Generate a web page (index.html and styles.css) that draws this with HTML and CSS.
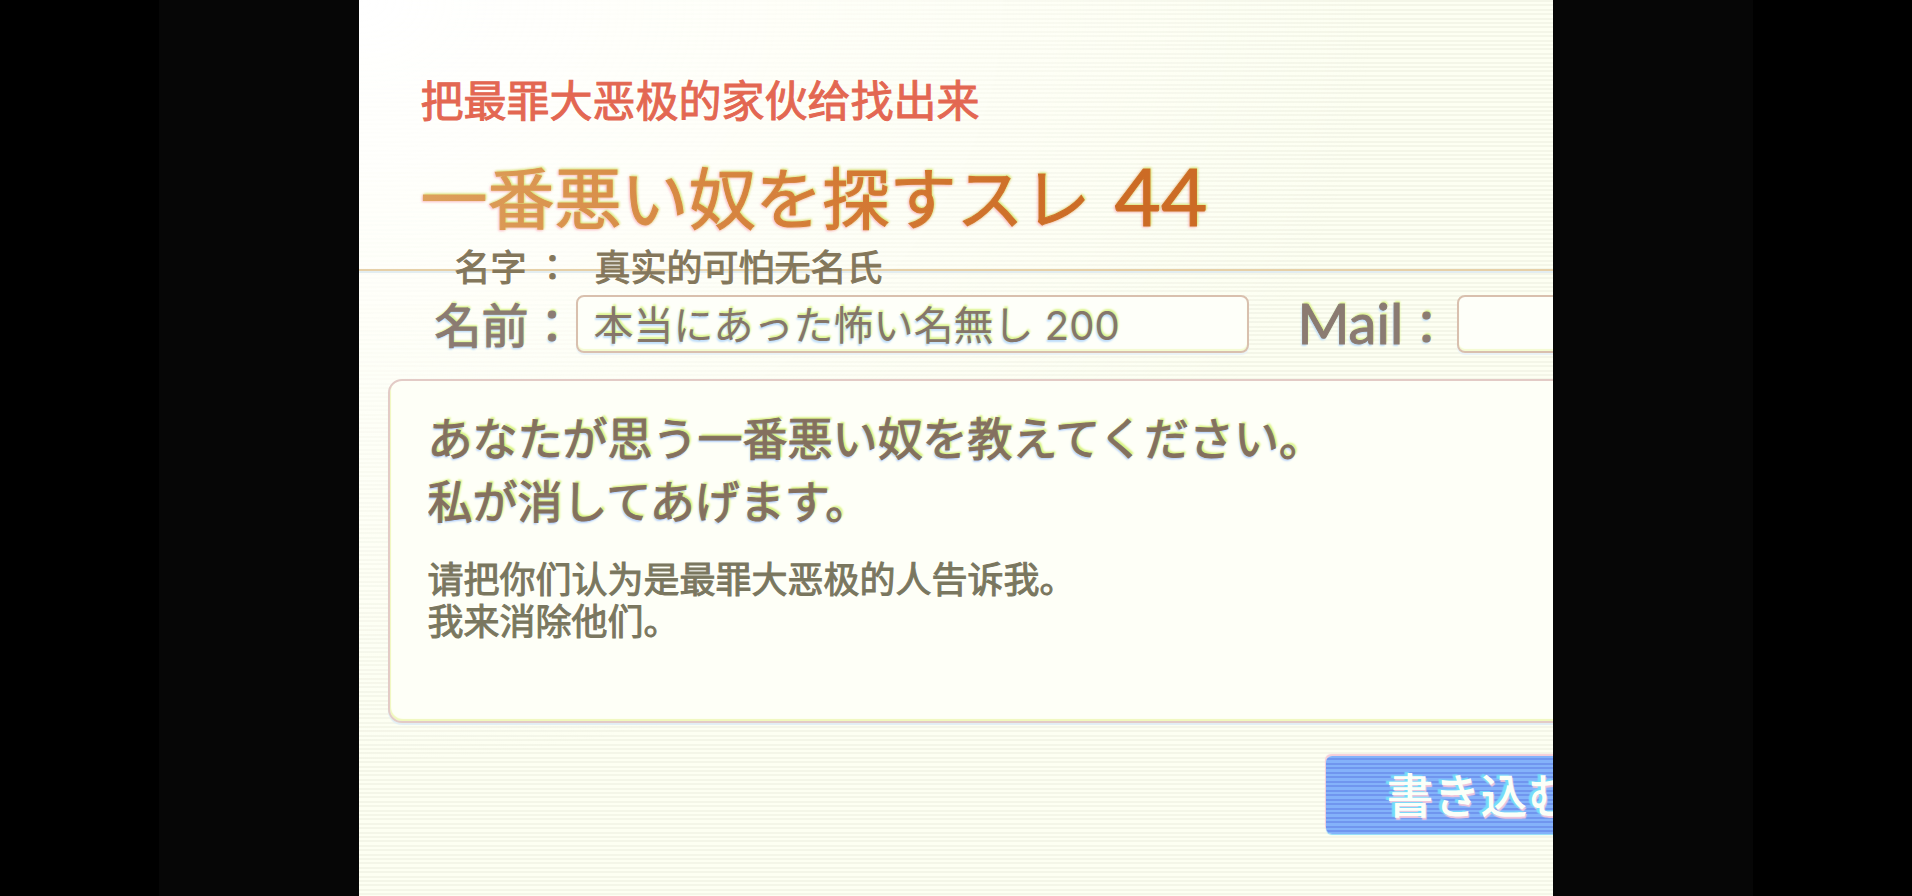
FILE: index.html
```html
<!DOCTYPE html>
<html lang="ja">
<head>
<meta charset="utf-8">
<title>一番悪い奴を探すスレ 44</title>
<link rel="stylesheet" href="styles.css">
</head>
<body>
<div class="frame">
  <main class="screen">
    <header class="thread-header">
      <p class="caption caption-title" lang="zh-CN">把最罪大恶极的家伙给找出来</p>
      <h1 class="thread-title">一番悪い奴を探すスレ <span class="thread-number">44</span></h1>
      <p class="caption caption-name" lang="zh-CN"><span>名字 <span lang="ja" class="colon">：</span></span><span>真实的可怕无名氏</span></p>
    </header>
    <form class="post-form">
      <div class="fields">
        <label class="label label-name" for="name">名前：</label>
        <input class="field field-name" id="name" type="text" value="本当にあった怖い名無し 200">
        <label class="label label-mail" for="mail"><span class="latin">Mail</span>：</label>
        <input class="field field-mail" id="mail" type="text">
      </div>
      <div class="message">
        <textarea class="message-text" aria-label="本文" rows="2">あなたが思う一番悪い奴を教えてください。
私が消してあげます。</textarea>
        <p class="caption caption-message" lang="zh-CN">请把你们认为是最罪大恶极的人告诉我。<br>我来消除他们。</p>
      </div>
      <button class="submit" type="button">書き込む</button>
    </form>
  </main>
</div>
</body>
</html>
```
FILE: styles.css
```css
* {
  box-sizing: border-box;
}

body {
  margin: 0;
  background: #000;
  font-family: "Noto Sans CJK JP", sans-serif;
}

.frame {
  display: flex;
  justify-content: center;
  width: 83.33%;
  min-height: 100vh;
  margin: 0 auto;
  background: #060606;
}

.screen {
  width: 75%;
  overflow: hidden;
  background:
    radial-gradient(ellipse at top left, #fff 0%, rgba(255, 255, 250, 0.8) 25%, rgba(255, 255, 250, 0) 60%),
    repeating-linear-gradient(to bottom,
      #f4f6e8 0 2px, #fdfff2 2px 4px,
      #f4f6e8 4px 6px, #fdfff2 6px 9px,
      #f4f6e8 9px 11px, #fdfff2 11px 13px,
      #f4f6e8 13px 15px, #fdfff2 15px 18px,
      #f4f6e8 18px 20px, #fdfff2 20px 22px);
}

.caption {
  margin: 0;
  font-family: "Noto Sans CJK SC", sans-serif;
  font-weight: 400;
  white-space: nowrap;
  -webkit-text-stroke: 1px currentColor;
}

.thread-header {
  position: relative;
  padding: 72px 0 34px 62px;
  border-bottom: 2px solid #e6d0a8;
  box-shadow: 0 2px 0 #e3edf0;
}

.caption-title {
  color: #e36752;
  font-size: 43px;
  line-height: 52px;
}

.thread-title {
  display: flex;
  gap: 24px;
  margin: 31px 0 0;
  font-size: 67px;
  font-weight: 400;
  line-height: 80px;
  white-space: nowrap;
  color: transparent;
  background: linear-gradient(to right, #dda05c 0, #d47a35 420px, #cc6b25 680px);
  background-clip: text;
  -webkit-text-stroke: 1px transparent;
  filter: drop-shadow(1px -1px 1px rgba(205, 240, 90, 0.8)) drop-shadow(-1px 1px 1px rgba(250, 120, 150, 0.5));
}

.thread-number {
  font-family: Lato, sans-serif;
  font-size: 80px;
  line-height: 80px;
}

.caption-name {
  position: absolute;
  left: 96px;
  bottom: -18px;
  display: flex;
  gap: 24px;
  color: #84775b;
  font-size: 36px;
  line-height: 44px;
}

.colon {
  font-family: "Noto Sans CJK JP", sans-serif;
}

.post-form {
  display: flex;
  flex-direction: column;
}

.fields {
  display: flex;
  align-items: center;
  padding-top: 24px;
}

.label {
  flex: none;
  height: 58px;
  color: #8b7b72;
  font-size: 47px;
  line-height: 56px;
  -webkit-text-stroke: 1px #8b7b72;
  text-shadow: 1px -2px 2px #dcf58c, -1px 2px 2px #bcdcfa;
}

.label-name {
  margin-left: 76px;
}

.label-mail {
  margin-left: 48px;
}

.latin {
  font-family: Lato, sans-serif;
  font-size: 56px;
  line-height: 56px;
}

.field {
  height: 58px;
  margin: 0;
  border: 2px solid #d9c0ae;
  border-radius: 8px;
  background: #fefff9;
  box-shadow: inset 0 -2px 1px #f4fbd0, 0 2px 1px #eaf2f6;
}

.field-name {
  flex: 0 0 56.4%;
  min-width: 0;
  padding: 0 16px 2px;
  color: #85766a;
  font-family: Inter, "Noto Sans CJK JP", sans-serif;
  font-size: 40px;
  text-shadow: 1px -2px 2px #dcf58c, -1px 2px 2px #bcdcfa;
}

.field-mail {
  flex: 1 0 120px;
  margin-left: 7px;
  margin-right: -24px;
}

.message {
  min-height: 344px;
  margin: 26px -24px 0 29px;
  padding: 24px 38px;
  border: 2px solid #e3cbc6;
  border-radius: 14px;
  background: #fefff7;
  box-shadow: inset 1px -2px 1px #f0f8bc, 0 2px 1px #e2eef4;
}

.message-text {
  display: block;
  width: 100%;
  height: 126px;
  padding: 0;
  border: 0;
  background: none;
  resize: none;
  overflow: hidden;
  color: #84705f;
  font-family: "Noto Sans CJK JP", sans-serif;
  font-size: 45px;
  font-weight: 400;
  line-height: 63px;
  -webkit-text-stroke: 1px #84705f;
  text-shadow: 2px -2px 2px #d8f37c, -1px 2px 2px #b4d0fb;
}

.caption-message {
  margin-top: 25px;
  color: #7a775f;
  font-size: 36px;
  line-height: 42px;
}

.submit {
  align-self: flex-end;
  margin: 33px -83px 0 0;
  padding: 0 62px 4px 60px;
  border: 0;
  border-radius: 6px;
  background: repeating-linear-gradient(to bottom,
    #84b2fa 0 2px, #7096ef 2px 4px,
    #84b2fa 4px 7px, #7096ef 7px 9px);
  box-shadow: -1px -2px 1px #f6cdd9, 0 1px 1px #8cdcf8;
  color: #fbfff8;
  font-family: "Noto Sans CJK JP", sans-serif;
  font-size: 47px;
  font-weight: 500;
  line-height: 74px;
  text-shadow: -3px -1px 1px #74dcfb, 1px 2px 1px #f2c6dc;
}
```
